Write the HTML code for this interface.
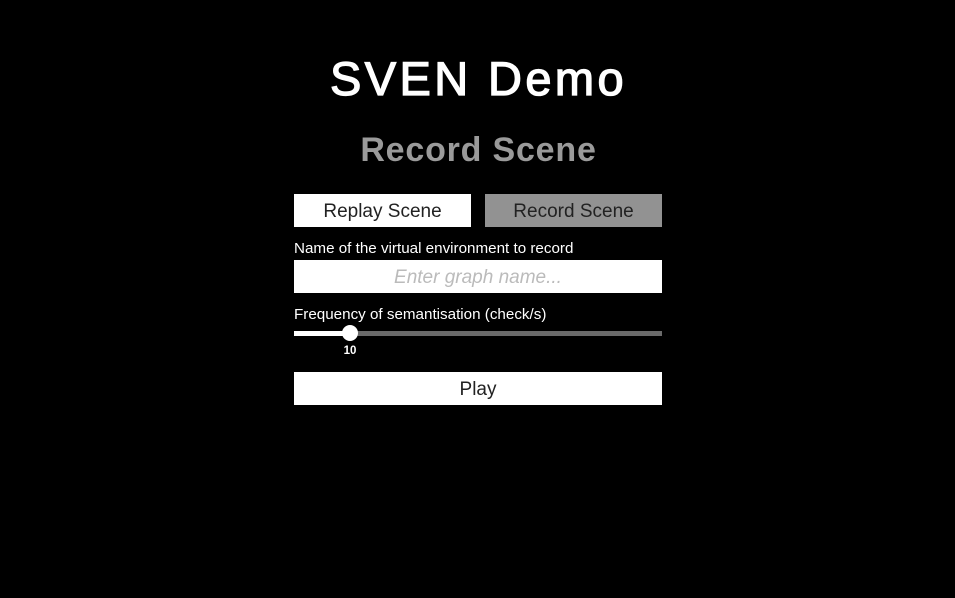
<!DOCTYPE html>
<html><head><style>
body{margin:0;width:955px;height:598px;background:#000;position:relative;overflow:hidden;font-family:"Liberation Sans",sans-serif}
.a{position:absolute}
.btn{position:absolute;height:33px;line-height:35px;text-align:center;font-size:19px;color:#222}
</style></head><body>
<div class="a" style="left:0;width:957px;top:52px;text-align:center;color:#fff;font-size:47px;font-weight:normal;-webkit-text-stroke:1.3px #fff;letter-spacing:3.4px;line-height:54px">SVEN Demo</div>
<div class="a" style="left:0;width:957px;top:130px;text-align:center;color:#9a9a9a;font-size:34px;font-weight:bold;letter-spacing:0.8px;line-height:40px">Record Scene</div>
<div class="btn" style="left:294px;top:194px;width:177px;background:#fff">Replay Scene</div>
<div class="btn" style="left:485px;top:194px;width:177px;background:#929292">Record Scene</div>
<div class="a" style="left:294px;top:240px;color:#fff;font-size:15.2px">Name of the virtual environment to record</div>
<div class="btn" style="left:294px;top:260px;width:368px;background:#fff;color:#bbb;font-style:italic">Enter graph name...</div>
<div class="a" style="left:294px;top:306px;color:#fff;font-size:15.2px">Frequency of semantisation (check/s)</div>
<div class="a" style="left:294px;top:331px;width:368px;height:5px;background:#6a6a6a"></div>
<div class="a" style="left:294px;top:331px;width:56px;height:5px;background:#fff"></div>
<div class="a" style="left:342px;top:325px;width:16px;height:16px;border-radius:50%;background:#fff"></div>
<div class="a" style="left:330px;width:40px;top:345px;text-align:center;color:#fff;font-size:11.5px;font-weight:bold">10</div>
<div class="btn" style="left:294px;top:372px;width:368px;background:#fff">Play</div>
</body></html>
